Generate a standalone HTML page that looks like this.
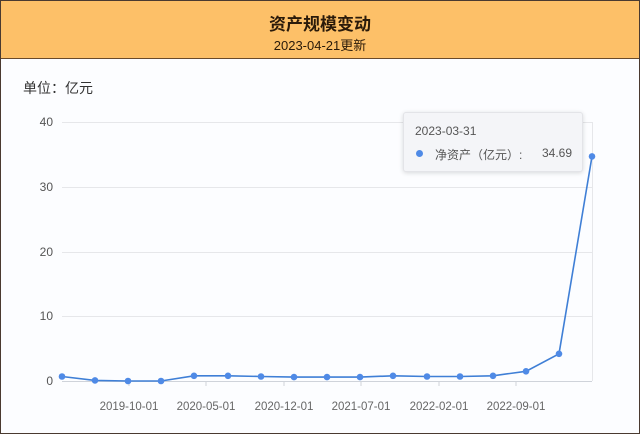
<!DOCTYPE html>
<html><head><meta charset="utf-8"><style>
body{margin:0;width:640px;height:434px;overflow:hidden;background:#fff;font-family:"Liberation Sans","Noto Sans CJK SC",sans-serif;}
.frame{position:absolute;left:0;top:0;width:638px;height:432px;border:1px solid #4a3a30;background:#fcfdff;}
.hdr{position:absolute;left:0;top:0;width:638px;height:57px;background:#fdc068;border-bottom:1px solid #6a4a2a;text-align:center;}
.t1{position:absolute;top:9px;width:100%;font-size:17px;font-weight:bold;color:#2a1a0a;}
.t2{position:absolute;top:34px;width:100%;font-size:13px;color:#2a1a0a;}
.unit{position:absolute;left:22px;top:77px;font-size:14px;color:#333;}
.tip{position:absolute;left:403px;top:112px;width:178px;height:58px;background:#f4f5f8;border:1px solid #e3e4e8;box-shadow:0 1px 5px rgba(0,0,0,.15);border-radius:3px;font-size:12px;color:#555;}
</style></head><body>
<div class="frame">
<div class="hdr"><div class="t1">资产规模变动</div><div class="t2">2023-04-21更新</div></div>
<div class="unit">单位：亿元</div>
</div>
<svg width="640" height="434" style="position:absolute;left:0;top:0" font-family="Liberation Sans, sans-serif">
<g stroke="#e6e7ea" stroke-width="1">
<line x1="62" y1="122.5" x2="592" y2="122.5"/><line x1="62" y1="187.5" x2="592" y2="187.5"/>
<line x1="62" y1="252.5" x2="592" y2="252.5"/><line x1="62" y1="316.5" x2="592" y2="316.5"/>
<line x1="592.5" y1="122" x2="592.5" y2="381"/>
</g>
<line x1="62" y1="381.5" x2="592" y2="381.5" stroke="#cfd3da"/>
<g stroke="#cfd3da"><line x1="129" y1="381" x2="129" y2="386"/><line x1="206" y1="381" x2="206" y2="386"/><line x1="284" y1="381" x2="284" y2="386"/><line x1="361" y1="381" x2="361" y2="386"/><line x1="439" y1="381" x2="439" y2="386"/><line x1="516" y1="381" x2="516" y2="386"/></g>
<g font-size="12" fill="#555" text-anchor="end"><text x="53" y="126">40</text><text x="53" y="191">30</text><text x="53" y="256">20</text><text x="53" y="320">10</text><text x="53" y="385">0</text></g>
<g font-size="11.5" fill="#666" text-anchor="middle"><text x="129" y="410">2019-10-01</text><text x="206" y="410">2020-05-01</text><text x="284" y="410">2020-12-01</text><text x="361" y="410">2021-07-01</text><text x="439" y="410">2022-02-01</text><text x="516" y="410">2022-09-01</text></g>
<polyline fill="none" stroke="#3f7fd6" stroke-width="1.6" points="62,376.5 95,380.4 128,381 161,381 194,375.8 228,375.8 261,376.5 294,377.1 327,377.1 360,377.1 393,375.8 427,376.5 460,376.5 493,375.8 526,371.3 559,353.8 592,156.4"/>
<g fill="#4f8ae6"><circle cx="62" cy="376.5" r="3.3"/><circle cx="95" cy="380.4" r="3.3"/><circle cx="128" cy="381" r="3.3"/><circle cx="161" cy="381" r="3.3"/><circle cx="194" cy="375.8" r="3.3"/><circle cx="228" cy="375.8" r="3.3"/><circle cx="261" cy="376.5" r="3.3"/><circle cx="294" cy="377.1" r="3.3"/><circle cx="327" cy="377.1" r="3.3"/><circle cx="360" cy="377.1" r="3.3"/><circle cx="393" cy="375.8" r="3.3"/><circle cx="427" cy="376.5" r="3.3"/><circle cx="460" cy="376.5" r="3.3"/><circle cx="493" cy="375.8" r="3.3"/><circle cx="526" cy="371.3" r="3.3"/><circle cx="559" cy="353.8" r="3.3"/><circle cx="592" cy="156.4" r="3.3"/></g>
</svg>
<div class="tip">
<div style="position:absolute;left:11px;top:11px;">2023-03-31</div>
<div style="position:absolute;left:12px;top:37px;width:7px;height:7px;border-radius:50%;background:#4f8ae6"></div>
<div style="position:absolute;left:31px;top:33px;font-family:'Liberation Sans','Noto Sans CJK SC',sans-serif;">净资产（亿元）:</div>
<div style="position:absolute;right:10px;top:33px;">34.69</div>
</div>
</body></html>
